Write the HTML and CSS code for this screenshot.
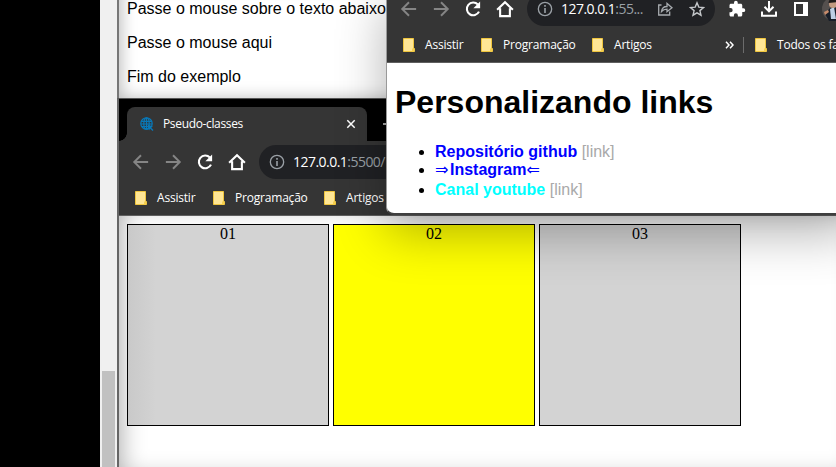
FILE: index.html
```html
<!DOCTYPE html>
<html lang="pt-BR">
<head>
<meta charset="utf-8">
<title>Pseudo-classes</title>
<link rel="stylesheet" href="styles.css">
</head>
<body>
<svg class="defs" aria-hidden="true">
  <symbol id="back" viewBox="0 0 24 24"><path d="M21.500 12H3.500M12 3 3 12l9 9" fill="none" stroke="currentColor" stroke-width="2.600"/></symbol>
  <symbol id="forward" viewBox="0 0 24 24"><path d="M2.500 12h18M12 3l9 9-9 9" fill="none" stroke="currentColor" stroke-width="2.600"/></symbol>
  <symbol id="reload" viewBox="0 0 24 24"><path d="M20 15.500A8.500 8.500 0 1 1 18.500 6" fill="none" stroke="currentColor" stroke-width="2.800"/><path d="M21.500 2v9H12.500z" fill="currentColor"/></symbol>
  <symbol id="home" viewBox="0 0 24 24"><path d="M1.500 13 12 3l10.500 10M5.500 11v10.500h13V11" fill="none" stroke="currentColor" stroke-width="2.800"/></symbol>
  <symbol id="info" viewBox="0 0 24 24"><circle cx="12" cy="12" r="10" fill="none" stroke="currentColor" stroke-width="2"/><path d="M12 10.500V18M12 6v2.500" fill="none" stroke="currentColor" stroke-width="2.400"/></symbol>
  <symbol id="folder" viewBox="0 0 12 14"><path d="M.5.500h10v10h1v3H.5z" fill="#ffe695" stroke="#f0c63e"/><path d="M9 10.500h2v3H9z" fill="#f5cf50"/></symbol>
</svg>

<div class="desktop">
  <div class="scrollbar"><div class="thumb"></div></div>

  <section class="window page-window">
    <p>Passe o mouse sobre o texto abaixo</p>
    <p>Passe o mouse aqui</p>
    <p>Fim do exemplo</p>
  </section>

  <section class="window class-window">
    <div class="tabstrip">
      <div class="tab">
        <svg class="favicon" viewBox="0 0 14 14"><g fill="none" stroke="#0878b8" stroke-width="1.200"><circle cx="6.500" cy="6.500" r="5.700"/><ellipse cx="6.500" cy="6.500" rx="2.700" ry="5.700"/><path d="M6.500.8v11.400M1.200 4.300h10.600M.8 7h11.400M1.500 9.500h8"/></g><path d="M7.500 7.500l5.500 2-2 1 2.500 2.500-1 1-2.500-2.500-.8 2z" fill="#0878b8"/></svg>
        <span class="tab-title">Pseudo-classes</span>
        <svg class="close" viewBox="0 0 10 10"><path d="M1.300 1.300l7.400 7.400M8.700 1.300 1.300 8.700" stroke="#fff" stroke-width="1.500"/></svg>
      </div>
      <svg class="new-tab" viewBox="0 0 12 12"><path d="M0 6h12M6 0v12" stroke="#ddd" stroke-width="1.500"/></svg>
    </div>
    <div class="toolbar">
      <span class="tool dim"><svg><use href="#back"/></svg></span>
      <span class="tool dim"><svg><use href="#forward"/></svg></span>
      <span class="tool"><svg><use href="#reload"/></svg></span>
      <span class="tool"><svg><use href="#home"/></svg></span>
      <div class="address"><svg class="info"><use href="#info"/></svg><span class="url"><b>127.0.0.1</b>:5500/</span></div>
    </div>
    <div class="bookmarks">
      <span class="bookmark first"><svg><use href="#folder"/></svg><span>Assistir</span></span>
      <span class="bookmark second"><svg><use href="#folder"/></svg><span>Programação</span></span>
      <span class="bookmark"><svg><use href="#folder"/></svg><span>Artigos</span></span>
    </div>
    <main class="boxes">
      <div class="box">01</div>
      <div class="box yellow">02</div>
      <div class="box">03</div>
    </main>
  </section>

  <section class="window link-window">
    <div class="toolbar">
      <span class="tool dim"><svg><use href="#back"/></svg></span>
      <span class="tool dim"><svg><use href="#forward"/></svg></span>
      <span class="tool"><svg><use href="#reload"/></svg></span>
      <span class="tool"><svg><use href="#home"/></svg></span>
      <div class="address">
        <svg class="info"><use href="#info"/></svg><span class="url"><b>127.0.0.1</b>:55...</span>
        <svg class="share" viewBox="0 0 16 16"><path d="M4.500 4H1.700v10h11v-3.500M4.500 10.500c.5-4 2.500-5 5.500-5V2.500L15 6.700l-5 4v-2.500c-2.500 0-4 .6-5.500 2.300z" fill="none" stroke="#a7abaf" stroke-width="1.300"/></svg>
        <svg class="star" viewBox="0 0 16 16"><path d="M8 1.800l1.800 4.300 4.700.4-3.600 3.100 1.100 4.600L8 11.800l-4 2.400 1.100-4.600-3.600-3.100 4.700-.4z" fill="none" stroke="#c4c7ca" stroke-width="1.400"/></svg>
      </div>
      <span class="tool extension"><svg viewBox="0 0 24 24"><path d="M20.500 11H19V7c0-1.100-.9-2-2-2h-4V3.500a2.500 2.500 0 0 0-5 0V5H4c-1.100 0-2 .9-2 2v3.800h1.500a2.700 2.700 0 0 1 0 5.400H2V20c0 1.100.9 2 2 2h3.800v-1.500a2.700 2.700 0 0 1 5.400 0V22H17c1.100 0 2-.9 2-2v-4h1.500a2.500 2.500 0 0 0 0-5z" fill="currentColor"/></svg></span>
      <span class="tool"><svg viewBox="0 0 18 18"><path d="M9 1v10M4.500 6.800 9 11.300l4.500-4.500M2 11.500v4.300h14v-4.300" fill="none" stroke="currentColor" stroke-width="2"/></svg></span>
      <span class="tool"><svg viewBox="0 0 18 18"><path d="M2 2h14v14H2zM4 4v10h7V4z" fill="currentColor" fill-rule="evenodd"/></svg></span>
      <svg class="avatar" viewBox="0 0 24 24"><circle cx="12" cy="12" r="12" fill="#55504e"/><path d="M3 17l5-6 9-1v14H7z" fill="#171e29"/><path d="M8 12l4-2 2 12H9z" fill="#bfd0e5"/><circle cx="11" cy="7" r="4" fill="#c39a80"/><path d="M6.500 6C7 0 14 0 15.500 5z" fill="#201b1a"/><path d="M2 15l4-2 1 2-4 3z" fill="#c88c6b"/></svg>
    </div>
    <div class="bookmarks">
      <span class="bookmark first"><svg><use href="#folder"/></svg><span>Assistir</span></span>
      <span class="bookmark second"><svg><use href="#folder"/></svg><span>Programação</span></span>
      <span class="bookmark third"><svg><use href="#folder"/></svg><span>Artigos</span></span>
      <svg class="more" viewBox="0 0 9 8"><path d="M1 .8 4 4 1 7.200M5 .8 8 4 5 7.200" fill="none" stroke="#fff" stroke-width="1.500"/></svg>
      <span class="divider"></span>
      <span class="bookmark all"><svg><use href="#folder"/></svg><span>Todos os fa</span></span>
    </div>
    <main class="links">
      <h1>Personalizando links</h1>
      <ul>
        <li><a>Repositório github</a> <span class="note">[link]</span></li>
        <li class="arrows"><a><i>⇒</i>Instagram<i>⇐</i></a></li>
        <li><a class="cyan">Canal youtube</a> <span class="note">[link]</span></li>
      </ul>
    </main>
  </section>
</div>
</body>
</html>
```
FILE: styles.css
```css
* { box-sizing: border-box; }
body { margin: 0; background: #000; overflow: hidden; }
svg { display: block; flex: none; }
.defs { position: absolute; width: 0; height: 0; }

.desktop {
  position: relative;
  width: 836px;
  height: 467px;
  overflow: hidden;
  background: #000;
  font-family: "Liberation Sans", Arial, sans-serif;
}
.scrollbar {
  width: 17px;
  height: 467px;
  margin-left: 100px;
  padding: 371px 2px 0;
  background: #f0f0f0;
}
.thumb { height: 96px; background: #c1c1c1; }

.window { position: absolute; overflow: hidden; white-space: nowrap; }

.page-window {
  left: 117px; top: 0;
  width: 719px; height: 98px;
  padding: 0 8px;
  border-left: 2px solid #777;
  background: #fff;
  box-shadow: inset 10px -8px 16px -8px #bbb;
}
.page-window p { margin: 0 0 16px; font-size: 16px; line-height: 18px; }

.class-window {
  left: 117px; top: 98px;
  width: 719px; height: 369px;
  border-left: 2px solid #666;
  border-top: 1px solid #555;
  background: #353535;
}
.tabstrip {
  display: flex;
  align-items: flex-end;
  height: 42px;
  padding-left: 8px;
  background: radial-gradient(circle at 0 0, #000 7.500px, #353535 8px) 0 100% / 8px 8px no-repeat, #000;
}
.tab {
  display: flex;
  align-items: center;
  width: 240px;
  height: 34px;
  padding: 0 11px 0 13px;
  border-radius: 8px 8px 0 0;
  background: #353535;
}
.favicon { width: 14px; height: 14px; }
.tab-title {
  flex: 1;
  margin-left: 9px;
  color: #fff;
  font: 12px/16px "Open Sans", "Noto Sans", sans-serif;
  letter-spacing: -.35px;
}
.close { width: 10px; height: 10px; }
.new-tab { width: 12px; height: 12px; margin: 0 0 11px 16px; }

.toolbar {
  display: flex;
  align-items: center;
  height: 42px;
  padding-left: 6px;
  background: #353535;
  color: #fff;
}
.tool { display: flex; flex: none; align-items: center; justify-content: center; width: 32px; }
.tool svg { width: 18px; height: 18px; }
.dim { color: #858585; }
.address {
  display: flex;
  flex: none;
  align-items: center;
  width: 188px;
  height: 34px;
  margin-left: 6px;
  padding-left: 10px;
  border-radius: 17px;
  background: #202124;
  color: #9aa0a6;
}
.info { width: 16px; height: 16px; }
.url { width: 86px; margin-left: 8px; font: 14px/20px "Open Sans", "Noto Sans", sans-serif; letter-spacing: -.53px; }
.url b { color: #fff; font-weight: 400; }
.share { width: 16px; height: 16px; margin-left: 10px; }
.star { width: 16px; height: 16px; margin-left: 16px; }
.extension { margin-left: 6px; }
.avatar { width: 24px; height: 24px; margin-left: 5px; }

.bookmarks {
  display: flex;
  align-items: center;
  height: 33px;
  padding: 0 0 3px 16px;
  border-bottom: 1px solid #5f5f5f;
  background: #353535;
  color: #fff;
  font: 12px/16px "Open Sans", "Noto Sans", sans-serif;
}
.bookmark { display: flex; flex: none; align-items: center; gap: 10px; letter-spacing: -.2px; }
.bookmark svg { width: 12px; height: 14px; }
.first { width: 78px; }
.second { width: 111px; }
.third { width: 133px; }
.more { width: 9px; height: 8px; }
.divider { flex: none; width: 1px; height: 16px; margin: 0 11px 0 9px; background: #6c6c6c; }

.boxes {
  display: flex;
  gap: 4px;
  height: 252px;
  padding: 8px;
  background: #fff;
  box-shadow: inset 12px 0 24px -10px #aaa;
  font: 16px/18px "Liberation Serif", "Times New Roman", serif;
  text-align: center;
}
.box { width: 202px; height: 202px; border: 1px solid #000; background: lightgray; }
.boxes .box:first-child { background: linear-gradient(90deg, #c9c9c9, lightgray 28px); }
.boxes .yellow { background: #ff0; }

.link-window {
  left: 386px; top: -12px;
  width: 470px; height: 227px;
  border: solid #999;
  border-width: 0 0 0 1px;
  border-bottom: 2px solid #3f3f3f;
  border-radius: 0 0 0 8px;
  background: #fff;
  box-shadow: 0 18px 50px rgba(0, 0, 0, .3);
}
.links { height: 150px; padding: 0 8px; }
.links h1 { margin: 20px 0 22px; font-size: 32px; line-height: 38px; letter-spacing: 0; }
.links ul { margin: 0; padding-left: 40px; font-size: 16px; line-height: 18px; }
.links a { color: #00f; font-weight: 700; }
.links .cyan { color: #0ff; }
.links .arrows { height: 20px; }
.arrows i { display: inline-block; width: 15px; font: 16px/16px "DejaVu Sans", sans-serif; }
.note { color: #a9a9a9; }
```
